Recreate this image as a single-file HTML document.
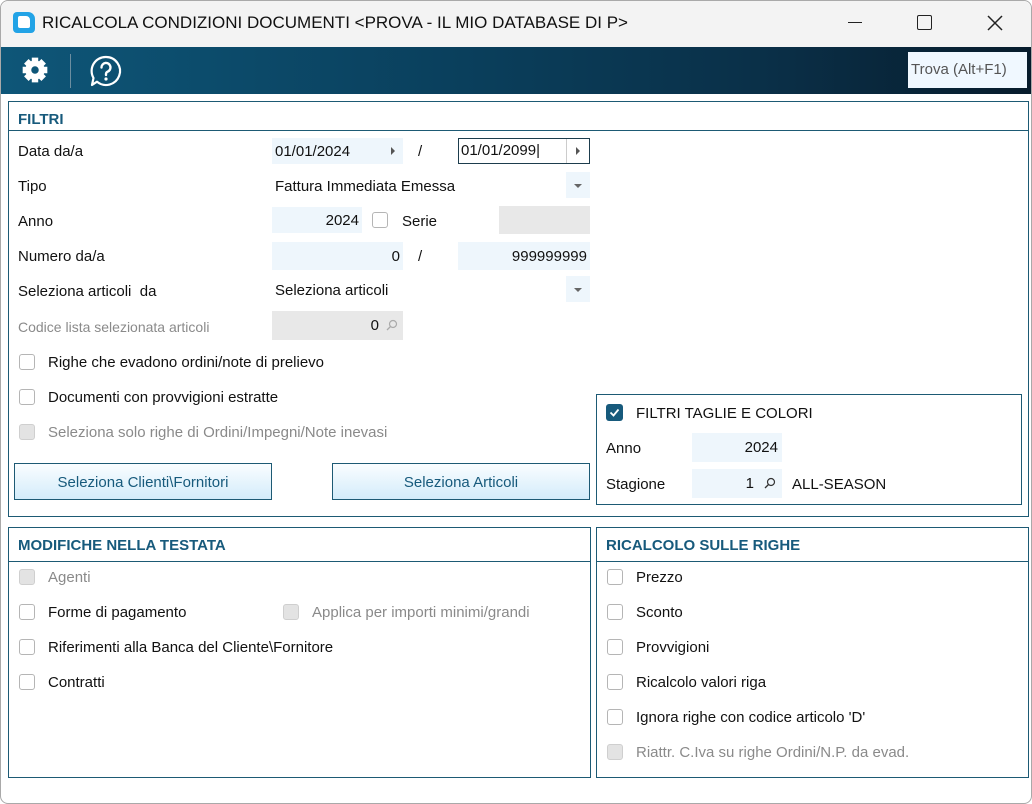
<!DOCTYPE html>
<html><head><meta charset="utf-8"><style>
*{box-sizing:border-box;margin:0;padding:0}
body{width:1032px;height:804px;background:#fff;font-family:"Liberation Sans",sans-serif;font-size:15px;color:#111;position:relative;overflow:hidden}
.a{position:absolute}
.t{position:absolute;height:20px;line-height:20px;white-space:nowrap;margin-top:1px}
.g{color:#8a8a8a}
.box{position:absolute;border:1px solid #1d5a74}
.h{position:absolute;font-weight:bold;color:#175a7c;font-size:15px;height:20px;line-height:20px;margin-top:1px}
.f{position:absolute;background:#eef6fc;height:26px;line-height:27px;padding:0 3px}
.gr{background:#e8e8e8}
.r{text-align:right}
.cb{position:absolute;width:16px;height:16px;border:1px solid #b5b5b5;border-radius:3px;background:#fff}
.cb.d{background:#e3e3e3;border-color:#cfcfcf}
.arr{position:absolute;width:0;height:0;border-left:4px solid transparent;border-right:4px solid transparent;border-top:4px solid #666}
.tri{position:absolute;width:0;height:0;border-top:4px solid transparent;border-bottom:4px solid transparent;border-left:4px solid #555}
.btn{position:absolute;height:37px;border:1px solid #1d5a74;background:linear-gradient(#fafdff,#d3ecfa);color:#175a7c;text-align:center;line-height:37px}
</style></head><body>
<div class="a" style="left:0;top:0;width:1032px;height:804px;border:1px solid #a9a9a9;border-radius:8px 8px 8px 8px"></div>
<div class="a" style="left:1px;top:1px;width:1030px;height:46px;background:#f3f3f3;border-radius:8px 8px 0 0"></div>
<div class="a" style="left:13px;top:12px;width:22px;height:21px;background:#22a3e6;border-radius:4px 7px 4px 4px"></div>
<div class="a" style="left:18px;top:16px;width:12px;height:12px;background:#fff;border-radius:2px 4px 2px 2px"></div>
<div class="t" style="left:42px;top:12px;font-size:17px">RICALCOLA CONDIZIONI DOCUMENTI &lt;PROVA - IL MIO DATABASE DI P&gt;</div>
<div class="a" style="left:848px;top:22px;width:14px;height:1px;background:#222"></div>
<div class="a" style="left:917px;top:15px;width:15px;height:15px;border:1.5px solid #222;border-radius:2px"></div>
<svg class="a" style="left:987px;top:15px" width="16" height="16"><path d="M1 1L15 15M15 1L1 15" stroke="#222" stroke-width="1.5"/></svg>
<div class="a" style="left:1px;top:47px;width:1030px;height:47px;background:linear-gradient(90deg,#0e5678 0%,#0a3f5c 45%,#0a2f47 75%,#071c2c 100%)"></div>
<svg class="a" style="left:20px;top:55px" width="30" height="30" viewBox="0 0 28 28"><g fill="#fff"><circle cx="14" cy="14" r="9"/><g stroke="#fff" stroke-width="6"><path d="M14 2.5v23M2.5 14h23M5.9 5.9l16.2 16.2M22.1 5.9L5.9 22.1"/></g></g><circle cx="14" cy="14" r="3.5" fill="#0e5678"/></svg>
<div class="a" style="left:70px;top:54px;width:1px;height:34px;background:#6c8ea0"></div>
<svg class="a" style="left:89px;top:54px" width="34" height="34" viewBox="0 0 34 34"><path d="M17 3a14 14 0 1 1 -9 24.7L3 31l1.5-7A14 14 0 0 1 17 3z" fill="none" stroke="#fff" stroke-width="2.2" stroke-linejoin="round"/><path d="M12.5 13.5a4.5 4.5 0 1 1 6 4.2c-1.2.5-1.5 1.2-1.5 2.6v0.7" fill="none" stroke="#fff" stroke-width="2.4" stroke-linecap="round"/><circle cx="17" cy="25" r="1.6" fill="#fff"/></svg>
<div class="a" style="left:908px;top:52px;width:119px;height:36px;background:#f0f8ff;color:#555;line-height:36px;padding-left:3px">Trova (Alt+F1)</div>

<div class="box" style="left:8px;top:101px;width:1021px;height:416px"></div>
<div class="h" style="left:18px;top:109px">FILTRI</div>
<div class="a" style="left:9px;top:130px;width:1019px;height:1px;background:#1d5a74"></div>
<div class="t" style="left:18px;top:141px">Data da/a</div>
<div class="f" style="left:272px;top:138px;width:131px">01/01/2024</div><div class="tri" style="left:391px;top:147px"></div>
<div class="t" style="left:418px;top:141px">/</div>
<div class="f" style="left:458px;top:138px;width:132px;background:#fff;border:1.5px solid #1d3d4d;line-height:24px;padding-left:2px">01/01/2099|</div>
<div class="a" style="left:566px;top:139px;width:1px;height:24px;background:#ccc"></div><div class="tri" style="left:576px;top:147px"></div>
<div class="t" style="left:18px;top:176px">Tipo</div>
<div class="t" style="left:275px;top:176px">Fattura Immediata Emessa</div>
<div class="f" style="left:566px;top:172px;width:24px"></div><div class="arr" style="left:574px;top:184px"></div>
<div class="t" style="left:18px;top:211px">Anno</div>
<div class="f r" style="left:272px;top:207px;width:90px">2024</div>
<div class="cb" style="left:372px;top:212px"></div>
<div class="t" style="left:402px;top:211px">Serie</div>
<div class="f gr" style="left:499px;top:206px;width:91px;height:28px"></div>
<div class="t" style="left:18px;top:246px">Numero da/a</div>
<div class="f r" style="left:272px;top:242px;width:131px;height:28px;line-height:29px">0</div>
<div class="t" style="left:418px;top:246px">/</div>
<div class="f r" style="left:458px;top:242px;width:132px;height:28px;line-height:29px">999999999</div>
<div class="t" style="left:18px;top:281px">Seleziona articoli &nbsp;da</div>
<div class="t" style="left:275px;top:280px">Seleziona articoli</div>
<div class="f" style="left:566px;top:276px;width:24px"></div><div class="arr" style="left:574px;top:288px"></div>
<div class="t g" style="left:18px;top:316px;font-size:14px">Codice lista selezionata articoli</div>
<div class="f gr r" style="left:272px;top:311px;width:131px;height:29px;line-height:30px;padding-right:24px">0</div>
<svg class="a" style="left:386px;top:319px" width="12" height="12"><circle cx="7" cy="5" r="3.5" fill="none" stroke="#aaa" stroke-width="1.2"/><path d="M4.5 7.5L1 11" stroke="#aaa" stroke-width="1.3"/></svg>
<div class="cb" style="left:19px;top:354px"></div><div class="t" style="left:48px;top:352px">Righe che evadono ordini/note di prelievo</div>
<div class="cb" style="left:19px;top:389px"></div><div class="t" style="left:48px;top:387px">Documenti con provvigioni estratte</div>
<div class="cb d" style="left:19px;top:424px"></div><div class="t g" style="left:48px;top:422px">Seleziona solo righe di Ordini/Impegni/Note inevasi</div>
<div class="btn" style="left:14px;top:463px;width:258px">Seleziona Clienti\Fornitori</div>
<div class="btn" style="left:332px;top:463px;width:258px">Seleziona Articoli</div>

<div class="box" style="left:596px;top:394px;width:426px;height:111px"></div>
<div class="a" style="left:606px;top:404px;width:17px;height:17px;background:#175a7c;border-radius:3px"></div>
<svg class="a" style="left:606px;top:404px" width="17" height="17"><path d="M4.5 8.5l3 3 5-6" fill="none" stroke="#fff" stroke-width="1.8"/></svg>
<div class="t" style="left:636px;top:403px">FILTRI TAGLIE E COLORI</div>
<div class="t" style="left:606px;top:438px">Anno</div>
<div class="f r" style="left:692px;top:433px;width:90px;height:29px;line-height:30px;padding-right:4px">2024</div>
<div class="t" style="left:606px;top:474px">Stagione</div>
<div class="f r" style="left:692px;top:469px;width:90px;height:29px;line-height:30px;padding-right:28px">1</div>
<svg class="a" style="left:764px;top:477px" width="12" height="12"><circle cx="7" cy="5" r="3.5" fill="none" stroke="#333" stroke-width="1.2"/><path d="M4.5 7.5L1 11" stroke="#333" stroke-width="1.3"/></svg>
<div class="t" style="left:792px;top:474px">ALL-SEASON</div>

<div class="box" style="left:8px;top:527px;width:583px;height:251px"></div>
<div class="h" style="left:18px;top:535px">MODIFICHE NELLA TESTATA</div>
<div class="a" style="left:9px;top:561px;width:581px;height:1px;background:#1d5a74"></div>
<div class="cb d" style="left:19px;top:569px"></div><div class="t g" style="left:48px;top:567px">Agenti</div>
<div class="cb" style="left:19px;top:604px"></div><div class="t" style="left:48px;top:602px">Forme di pagamento</div>
<div class="cb d" style="left:283px;top:604px"></div><div class="t g" style="left:312px;top:602px">Applica per importi minimi/grandi</div>
<div class="cb" style="left:19px;top:639px"></div><div class="t" style="left:48px;top:637px">Riferimenti alla Banca del Cliente\Fornitore</div>
<div class="cb" style="left:19px;top:674px"></div><div class="t" style="left:48px;top:672px">Contratti</div>

<div class="box" style="left:596px;top:527px;width:433px;height:251px"></div>
<div class="h" style="left:606px;top:535px">RICALCOLO SULLE RIGHE</div>
<div class="a" style="left:597px;top:561px;width:431px;height:1px;background:#1d5a74"></div>
<div class="cb" style="left:607px;top:569px"></div><div class="t" style="left:636px;top:567px">Prezzo</div>
<div class="cb" style="left:607px;top:604px"></div><div class="t" style="left:636px;top:602px">Sconto</div>
<div class="cb" style="left:607px;top:639px"></div><div class="t" style="left:636px;top:637px">Provvigioni</div>
<div class="cb" style="left:607px;top:674px"></div><div class="t" style="left:636px;top:672px">Ricalcolo valori riga</div>
<div class="cb" style="left:607px;top:709px"></div><div class="t" style="left:636px;top:707px">Ignora righe con codice articolo 'D'</div>
<div class="cb d" style="left:607px;top:744px"></div><div class="t g" style="left:636px;top:742px">Riattr. C.Iva su righe Ordini/N.P. da evad.</div>
</body></html>
